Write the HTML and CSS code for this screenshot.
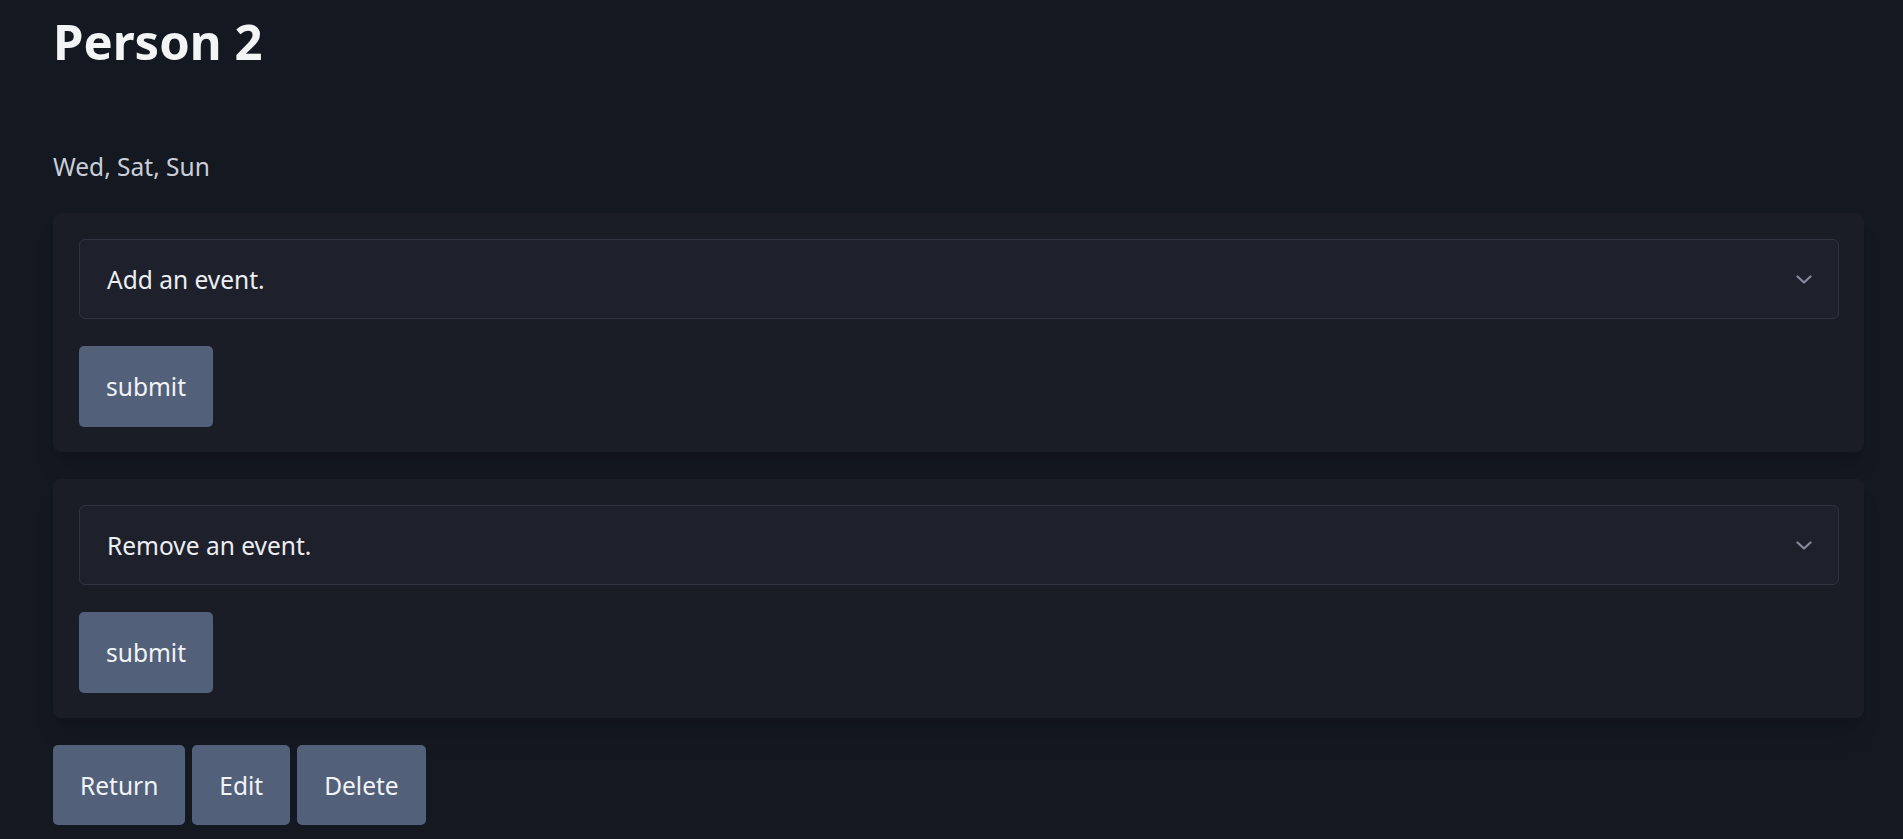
FILE: index.html
```html
<!DOCTYPE html>
<html lang="en">
<head>
<meta charset="utf-8">
<title>Person 2</title>
<link rel="stylesheet" href="styles.css">
</head>
<body>
<main class="page">
  <h1 class="title">Person 2</h1>
  <p class="days">Wed, Sat, Sun</p>
  <form class="card">
    <div class="select">
      <span class="select-text">Add an event.</span>
      <svg class="chev" width="16" height="9" viewBox="0 0 16 9"><path d="M1.5 1.5 L8 7.5 L14.5 1.5" fill="none" stroke="#858b9c" stroke-width="2.2" stroke-linecap="round" stroke-linejoin="round"/></svg>
    </div>
    <div class="row"><button type="button" class="btn btn-card">submit</button></div>
  </form>
  <form class="card">
    <div class="select">
      <span class="select-text">Remove an event.</span>
      <svg class="chev" width="16" height="9" viewBox="0 0 16 9"><path d="M1.5 1.5 L8 7.5 L14.5 1.5" fill="none" stroke="#858b9c" stroke-width="2.2" stroke-linecap="round" stroke-linejoin="round"/></svg>
    </div>
    <div class="row"><button type="button" class="btn btn-card">submit</button></div>
  </form>
  <div class="actions">
    <button type="button" class="btn btn-action">Return</button>
    <button type="button" class="btn btn-action">Edit</button>
    <button type="button" class="btn btn-action">Delete</button>
  </div>
</main>
</body>
</html>
```

FILE: styles.css
```css
* { box-sizing: border-box; }
html, body {
  margin: 0;
  padding: 0;
  background: #141821;
  height: 100%;
  overflow: hidden;
}
body {
  font-family: "Noto Sans", "Open Sans", sans-serif;
  color: #e5e7eb;
}
.page {
  padding: 0 39px 0 53px;
  display: flex;
  flex-direction: column;
}
.title {
  margin: 11px 0 0 0;
  font-size: 49px;
  line-height: 60px;
  font-weight: 700;
  color: #f3f4f6;
}
.days {
  margin: 78px 0 0 0;
  font-size: 24.5px;
  line-height: 36px;
  color: #c9ced8;
}
.card {
  margin: 28px 0 0 0;
  background: #1a1d26;
  border-radius: 8px;
  padding: 26px 25px 25px 26px;
  display: flex;
  flex-direction: column;
  gap: 27px;
  box-shadow: 0 20px 25px -5px rgba(0,0,0,0.12), 0 8px 10px -6px rgba(0,0,0,0.12);
}
.card + .card { margin-top: 27px; }
.select {
  height: 80px;
  background: #1e212b;
  border: 1px solid #2f3341;
  border-radius: 6px;
  display: flex;
  align-items: center;
  justify-content: space-between;
  padding: 0 26px 0 27px;
}
.select-text {
  font-size: 24.5px;
  color: #eceef2;
}
.chev { display: block; }
.row { display: flex; }
.btn {
  font-family: "Noto Sans", "Open Sans", sans-serif;
  font-size: 24.5px;
  color: #f1f3f6;
  background: #536079;
  border: none;
  border-radius: 5px;
  padding: 0 27px;
  cursor: pointer;
}
.btn-card { height: 81px; }
.actions {
  margin-top: 27px;
  display: flex;
  gap: 7px;
}
.btn-action { height: 80px; }
```
